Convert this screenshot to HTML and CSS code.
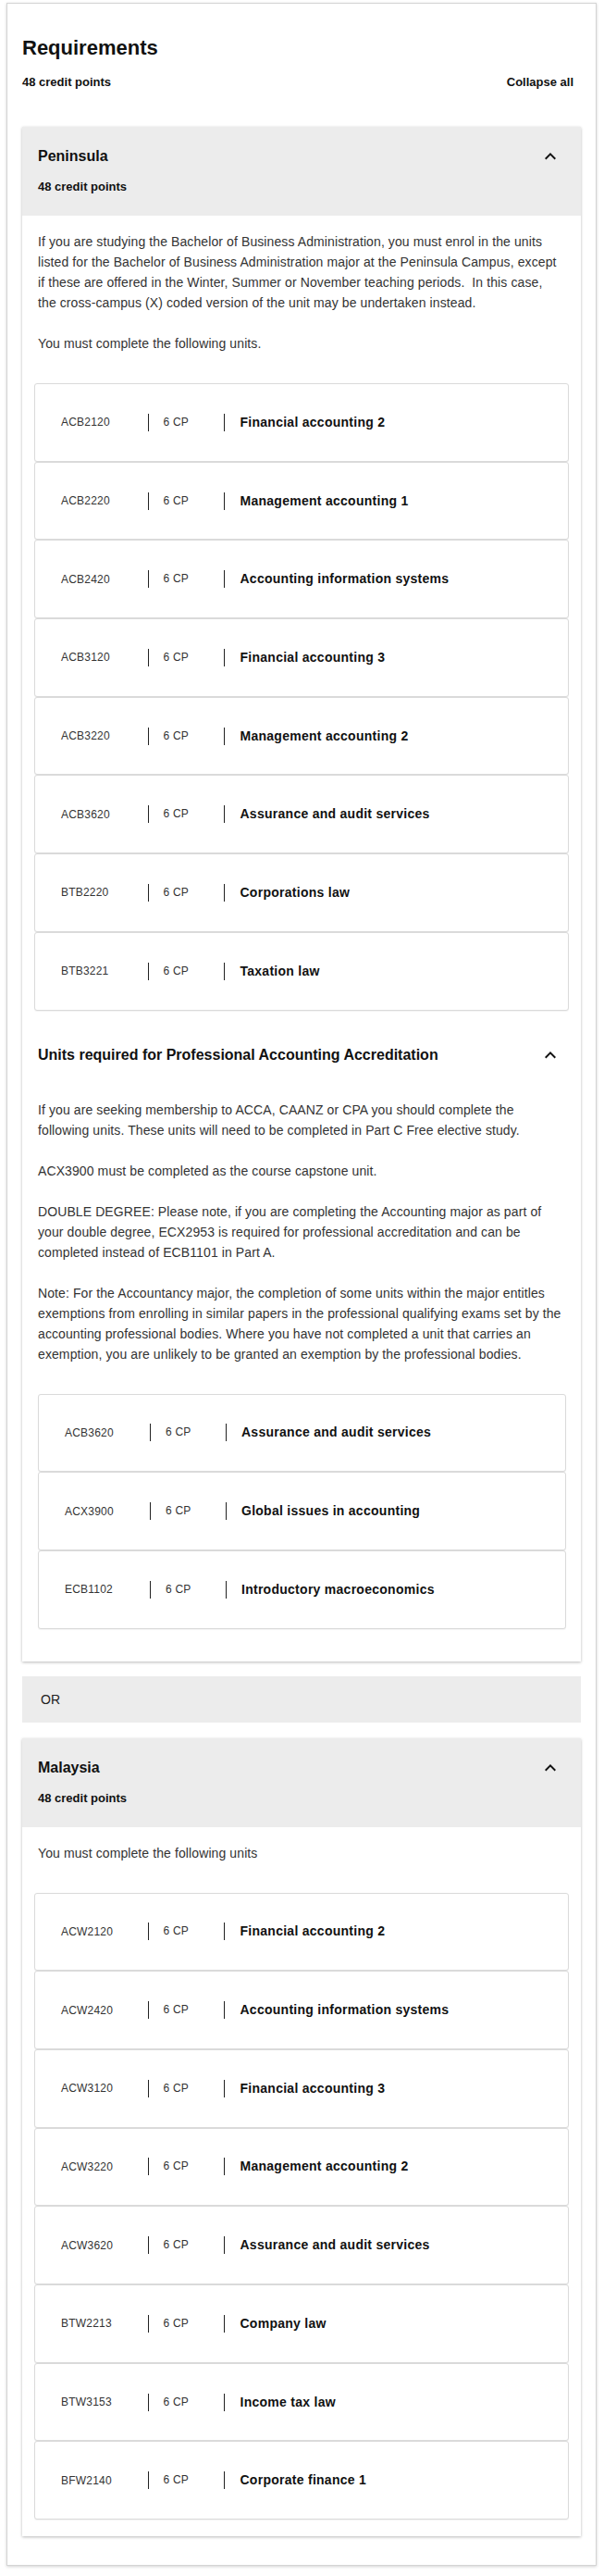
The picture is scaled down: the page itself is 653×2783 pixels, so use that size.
FILE: index.html
```html
<!DOCTYPE html>
<html lang="en">
<head>
    <meta charset="UTF-8">
    <meta name="viewport" content="width=device-width, initial-scale=1.0">
    <title>Requirements</title>
    <link rel="stylesheet" href="styles.css">
</head>
<body>
    <div class="requirements">
        <h1 class="req-title">Requirements</h1>
        <div class="req-meta">
            <span>48 credit points</span>
            <span class="collapse-all">Collapse all</span>
        </div>

        <!-- Peninsula campus -->
        <section class="group">
            <header class="group-head">
                <div class="head-row">
                    <h2>Peninsula</h2>
                    <svg class="chevron" viewBox="0 0 24 24"><path d="M12 8l-6 6 1.41 1.41L12 10.83l4.59 4.58L18 14z"/></svg>
                </div>
                <div class="group-cp">48 credit points</div>
            </header>
            <div class="group-body">
                <div class="desc">
                    <p>If you are studying the Bachelor of Business Administration, you must enrol in the units listed for the Bachelor of Business Administration major at the Peninsula Campus, except if these are offered in the Winter, Summer or November teaching periods.&nbsp; In this case, the cross-campus (X) coded version of the unit may be undertaken instead.</p>
                    <p>You must complete the following units.</p>
                </div>
                <ul class="unit-list">
                    <li class="unit"><span class="unit-code">ACB2120</span><span class="unit-cp">6 CP</span><span class="unit-name">Financial accounting 2</span></li>
                    <li class="unit"><span class="unit-code">ACB2220</span><span class="unit-cp">6 CP</span><span class="unit-name">Management accounting 1</span></li>
                    <li class="unit"><span class="unit-code">ACB2420</span><span class="unit-cp">6 CP</span><span class="unit-name">Accounting information systems</span></li>
                    <li class="unit"><span class="unit-code">ACB3120</span><span class="unit-cp">6 CP</span><span class="unit-name">Financial accounting 3</span></li>
                    <li class="unit"><span class="unit-code">ACB3220</span><span class="unit-cp">6 CP</span><span class="unit-name">Management accounting 2</span></li>
                    <li class="unit"><span class="unit-code">ACB3620</span><span class="unit-cp">6 CP</span><span class="unit-name">Assurance and audit services</span></li>
                    <li class="unit"><span class="unit-code">BTB2220</span><span class="unit-cp">6 CP</span><span class="unit-name">Corporations law</span></li>
                    <li class="unit"><span class="unit-code">BTB3221</span><span class="unit-cp">6 CP</span><span class="unit-name">Taxation law</span></li>
                </ul>

                <div class="subgroup">
                    <div class="head-row sub-head">
                        <h3>Units required for Professional Accounting Accreditation</h3>
                        <svg class="chevron" viewBox="0 0 24 24"><path d="M12 8l-6 6 1.41 1.41L12 10.83l4.59 4.58L18 14z"/></svg>
                    </div>
                    <div class="desc">
                        <p>If you are seeking membership to ACCA, CAANZ or CPA you should complete the following units. These units will need to be completed in Part C Free elective study.</p>
                        <p>ACX3900 must be completed as the course capstone unit.</p>
                        <p>DOUBLE DEGREE: Please note, if you are completing the Accounting major as part of your double degree, ECX2953 is required for professional accreditation and can be completed instead of ECB1101 in Part A.</p>
                        <p>Note: For the Accountancy major, the completion of some units within the major entitles exemptions from enrolling in similar papers in the professional qualifying exams set by the accounting professional bodies. Where you have not completed a unit that carries an exemption, you are unlikely to be granted an exemption by the professional bodies.</p>
                    </div>
                    <ul class="unit-list">
                        <li class="unit"><span class="unit-code">ACB3620</span><span class="unit-cp">6 CP</span><span class="unit-name">Assurance and audit services</span></li>
                        <li class="unit"><span class="unit-code">ACX3900</span><span class="unit-cp">6 CP</span><span class="unit-name">Global issues in accounting</span></li>
                        <li class="unit"><span class="unit-code">ECB1102</span><span class="unit-cp">6 CP</span><span class="unit-name">Introductory macroeconomics</span></li>
                    </ul>
                </div>
            </div>
        </section>

        <div class="or-box">OR</div>

        <!-- Malaysia campus -->
        <section class="group">
            <header class="group-head">
                <div class="head-row">
                    <h2>Malaysia</h2>
                    <svg class="chevron" viewBox="0 0 24 24"><path d="M12 8l-6 6 1.41 1.41L12 10.83l4.59 4.58L18 14z"/></svg>
                </div>
                <div class="group-cp">48 credit points</div>
            </header>
            <div class="group-body">
                <div class="desc">
                    <p>You must complete the following units</p>
                </div>
                <ul class="unit-list">
                    <li class="unit"><span class="unit-code">ACW2120</span><span class="unit-cp">6 CP</span><span class="unit-name">Financial accounting 2</span></li>
                    <li class="unit"><span class="unit-code">ACW2420</span><span class="unit-cp">6 CP</span><span class="unit-name">Accounting information systems</span></li>
                    <li class="unit"><span class="unit-code">ACW3120</span><span class="unit-cp">6 CP</span><span class="unit-name">Financial accounting 3</span></li>
                    <li class="unit"><span class="unit-code">ACW3220</span><span class="unit-cp">6 CP</span><span class="unit-name">Management accounting 2</span></li>
                    <li class="unit"><span class="unit-code">ACW3620</span><span class="unit-cp">6 CP</span><span class="unit-name">Assurance and audit services</span></li>
                    <li class="unit"><span class="unit-code">BTW2213</span><span class="unit-cp">6 CP</span><span class="unit-name">Company law</span></li>
                    <li class="unit"><span class="unit-code">BTW3153</span><span class="unit-cp">6 CP</span><span class="unit-name">Income tax law</span></li>
                    <li class="unit"><span class="unit-code">BFW2140</span><span class="unit-cp">6 CP</span><span class="unit-name">Corporate finance 1</span></li>
                </ul>
            </div>
        </section>
    </div>
</body>
</html>
```

FILE: styles.css
```css
body {
    margin: 0;
    background-color: #fff;
    font-family: "Liberation Sans", Arial, sans-serif;
    color: #222;
}
.requirements {
    margin: 3px 8px 8px 7px;
    padding: 35px 16px 31px;
    border: 1px solid #d4d4d4;
    box-shadow: 0 1px 3px rgba(0, 0, 0, 0.18);
    background-color: #fff;
}
.req-title {
    margin: 0 0 16px;
    font-size: 22px;
    line-height: 26px;
    font-weight: bold;
    color: #111;
}
.req-meta {
    display: flex;
    justify-content: space-between;
    padding-right: 8px;
    margin-bottom: 40px;
    font-size: 13px;
    line-height: 16px;
    font-weight: bold;
    color: #111;
}
.collapse-all {
    cursor: pointer;
}

/* campus group card */
.group {
    background-color: #fff;
    box-shadow: 0 1px 3px rgba(0, 0, 0, 0.28);
}
.group-head {
    padding: 22px 21px 23px 17px;
    background-color: #ececec;
}
.head-row {
    display: flex;
    justify-content: space-between;
    align-items: center;
}
.head-row h2,
.head-row h3 {
    margin: 0;
    font-size: 16px;
    line-height: 20px;
    font-weight: bold;
    color: #111;
}
.chevron {
    width: 24px;
    height: 24px;
    margin: -2px 0;
    fill: #111;
    flex-shrink: 0;
}
.group-cp {
    margin-top: 15px;
    font-size: 13px;
    line-height: 16px;
    font-weight: bold;
    color: #111;
}
.group-body {
    padding: 17px 13px 18px;
}
.desc {
    padding-left: 4px;
    font-size: 14px;
    line-height: 22px;
    letter-spacing: 0.1px;
    color: #333;
}
.desc p {
    max-width: 567px;
    margin: 0 0 22px;
}
.desc p:last-child {
    margin-bottom: 0;
}

/* unit rows */
.unit-list {
    list-style: none;
    margin: 32px 0 0;
    padding: 0;
}
.unit {
    display: grid;
    grid-template-columns: 21.1% 14.4% 1fr;
    align-items: center;
    height: 84.7px;
    box-sizing: border-box;
    border: 1px solid #dadada;
    border-radius: 3px;
    box-shadow: 0 1px 1px rgba(0, 0, 0, 0.05);
    background-color: #fff;
}
.unit-code {
    padding-left: 28px;
    font-size: 12px;
    letter-spacing: 0.2px;
    color: #333;
}
.unit-cp {
    padding-left: 16px;
    border-left: 1px solid #222;
    font-size: 12px;
    line-height: 19px;
    letter-spacing: 0.2px;
    color: #333;
}
.unit-name {
    padding-left: 16px;
    border-left: 1px solid #222;
    font-size: 14px;
    line-height: 19px;
    font-weight: bold;
    letter-spacing: 0.27px;
    color: #111;
}

/* accreditation block inside the Peninsula group */
.subgroup {
    padding: 36px 3px 17px 4px;
}
.sub-head {
    margin-bottom: 36px;
    padding-right: 5px;
}
.sub-head h3 {
    line-height: 24px;
}
.subgroup .desc {
    padding: 0;
}

.or-box {
    display: flex;
    align-items: center;
    height: 50px;
    margin: 16px 0 17px;
    padding-left: 20px;
    background-color: #ececec;
    font-size: 14px;
    color: #222;
}
```
